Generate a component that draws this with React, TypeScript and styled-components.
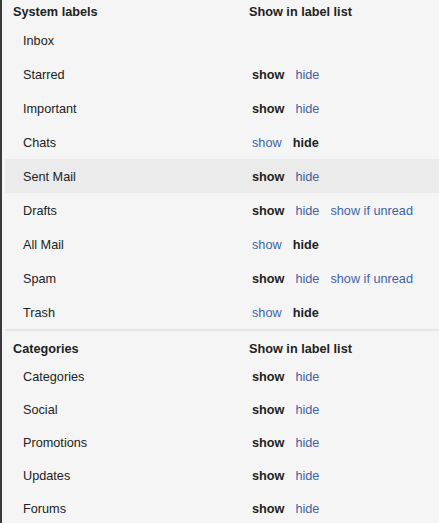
import React from "react";
import styled, { createGlobalStyle } from "styled-components";

const GlobalStyle = createGlobalStyle`
  html, body {
    margin: 0;
    padding: 0;
    background: #f5f5f5;
  }
  body {
    font-family: Arial, "Liberation Sans", sans-serif;
    font-size: 12.7px;
    color: #222;
  }
`;

const Frame = styled.div`
  width: 439px;
  height: 523px;
  overflow: hidden;
  border-left: 2px solid #3a3a3a;
  box-sizing: border-box;
  background: #f5f5f5;
  padding-left: 3px;
`;

const Section = styled.div<{ $divider?: boolean }>`
  border-bottom: ${(p) => (p.$divider ? "2px solid #e6e6e6" : "none")};
`;

const HeaderRow = styled.div<{ $top: number; $bottom: number }>`
  display: grid;
  grid-template-columns: 236px 1fr;
  padding: ${(p) => p.$top}px 0 ${(p) => p.$bottom}px 8px;
  line-height: 15px;
  font-weight: bold;
  color: #222;
`;

const Row = styled.div<{ $height: number; $active?: boolean }>`
  display: grid;
  grid-template-columns: 229px 1fr;
  align-items: center;
  box-sizing: border-box;
  height: ${(p) => p.$height}px;
  padding: 2px 0 0 18px;
  background: ${(p) => (p.$active ? "#ebebeb" : "transparent")};
`;

const Label = styled.div`
  color: #222;
`;

const Options = styled.div`
  display: flex;
  gap: 11px;
`;

const Option = styled.span<{ $selected?: boolean }>`
  font-weight: ${(p) => (p.$selected ? "bold" : "normal")};
  color: ${(p) => (p.$selected ? "#222" : "#3e63a7")};
  cursor: ${(p) => (p.$selected ? "default" : "pointer")};
`;

type Item = {
  name: string;
  state?: "show" | "hide";
  unread?: boolean;
  active?: boolean;
};

const systemLabels: Item[] = [
  { name: "Inbox" },
  { name: "Starred", state: "show" },
  { name: "Important", state: "show" },
  { name: "Chats", state: "hide" },
  { name: "Sent Mail", state: "show", active: true },
  { name: "Drafts", state: "show", unread: true },
  { name: "All Mail", state: "hide" },
  { name: "Spam", state: "show", unread: true },
  { name: "Trash", state: "hide" },
];

const categories: Item[] = [
  { name: "Categories", state: "show" },
  { name: "Social", state: "show" },
  { name: "Promotions", state: "show" },
  { name: "Updates", state: "show" },
  { name: "Forums", state: "show" },
];

const LabelRow: React.FC<{ item: Item; height: number }> = ({ item, height }) => (
  <Row $height={height} $active={item.active}>
    <Label>{item.name}</Label>
    {item.state ? (
      <Options>
        <Option $selected={item.state === "show"}>show</Option>
        <Option $selected={item.state === "hide"}>hide</Option>
        {item.unread && <Option>show if unread</Option>}
      </Options>
    ) : (
      <span />
    )}
  </Row>
);

export default function App() {
  return (
    <>
      <GlobalStyle />
      <Frame>
        <Section $divider>
          <HeaderRow $top={5} $bottom={3}>
            <span>System labels</span>
            <span>Show in label list</span>
          </HeaderRow>
          {systemLabels.map((item) => (
            <LabelRow key={item.name} item={item} height={34} />
          ))}
        </Section>
        <Section>
          <HeaderRow $top={11} $bottom={2}>
            <span>Categories</span>
            <span>Show in label list</span>
          </HeaderRow>
          {categories.map((item) => (
            <LabelRow key={item.name} item={item} height={33} />
          ))}
        </Section>
      </Frame>
    </>
  );
}
